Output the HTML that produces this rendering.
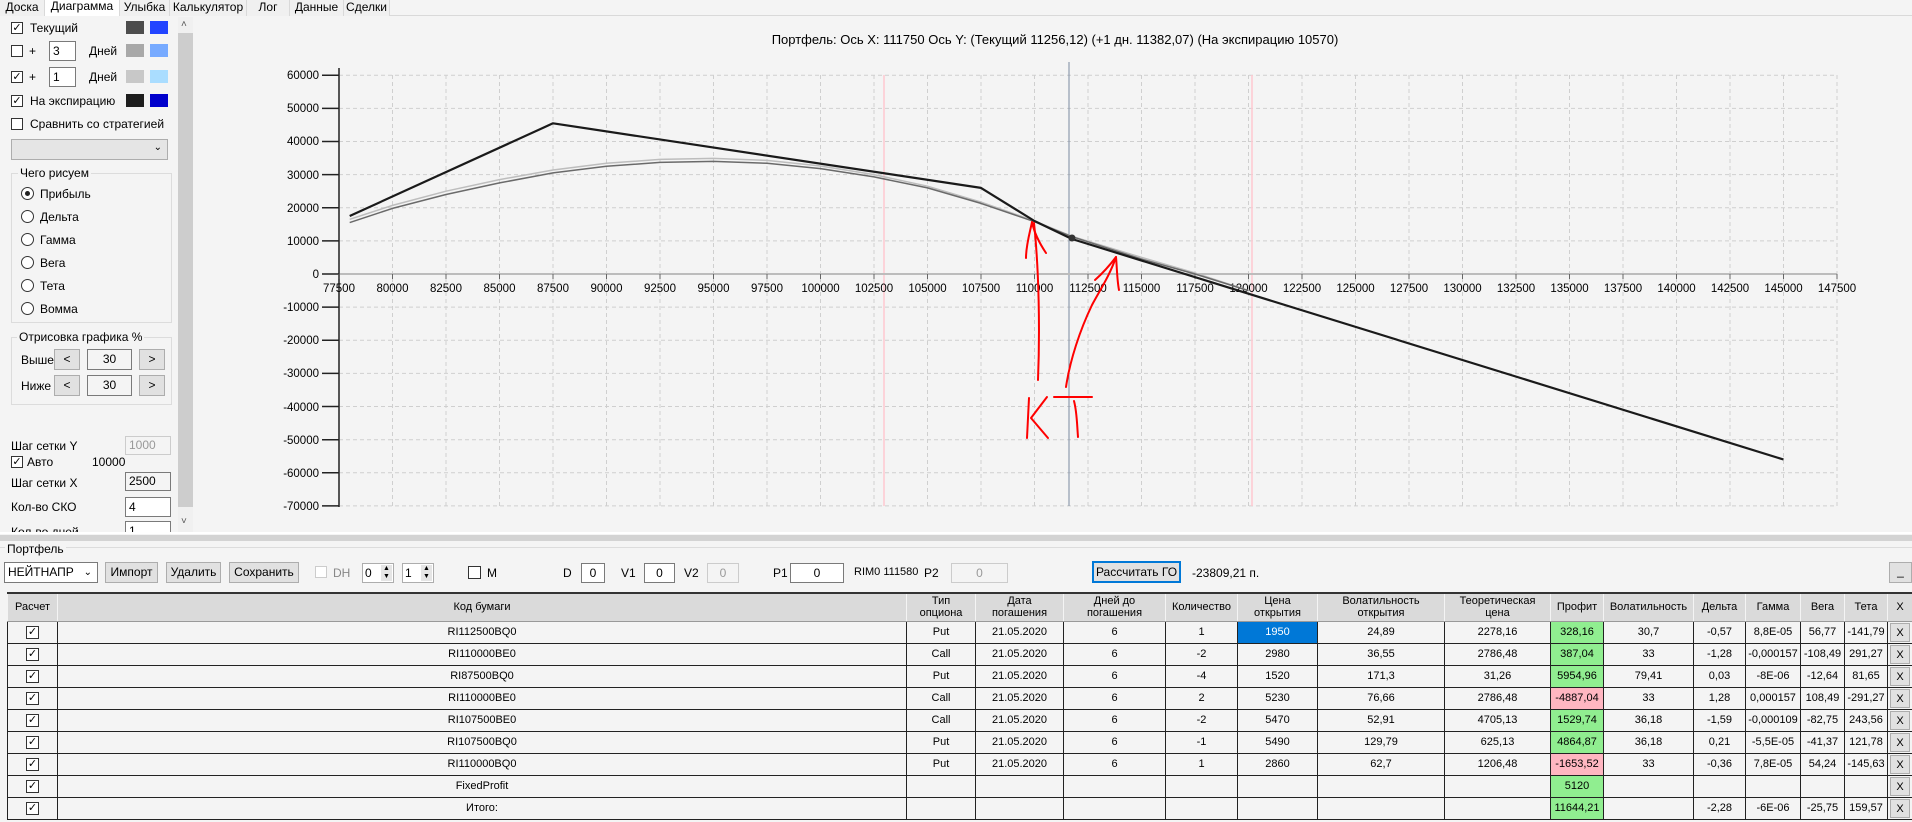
<!DOCTYPE html>
<html><head><meta charset="utf-8">
<style>
*{box-sizing:border-box}
body{margin:0;width:1912px;height:822px;overflow:hidden;background:#f4f4f4;font-family:"Liberation Sans",sans-serif;font-size:12px;color:#000;position:relative}
.a{position:absolute;white-space:nowrap}
.tab{position:absolute;top:0;height:16px;line-height:15px;text-align:center;border-right:1px solid #d9d9d9;background:#f0f0f0}
.cb{position:absolute;width:12px;height:12px;border:1px solid #333;background:#fff;font-size:11px;line-height:10px;text-align:center}
.rb{position:absolute;width:13px;height:13px;border:1px solid #333;border-radius:50%;background:#fff}
.inp{position:absolute;background:#fff;border:1px solid #7a7a7a;height:20px;line-height:18px;padding-left:3px}
.btn{position:absolute;background:#e1e1e1;border:1px solid #adadad;text-align:center;height:21px;line-height:19px}
.sw{position:absolute;width:18px;height:13px}
.grp{position:absolute;border:1px solid #dcdcdc}
.gt{position:absolute;background:#f4f4f4;padding:0 2px}
table{position:absolute;left:7px;top:592px;border-collapse:collapse;table-layout:fixed;width:1905px;border-top:2px solid #333}
td{border:1px solid #222;height:22px;padding:0;text-align:center;font-size:11px;overflow:hidden;white-space:nowrap;background:#f4f4f4}
th{background:#dadada;font-weight:normal;font-size:11px;height:28px;border-left:1px solid #f4f4f4;border-right:1px solid #f4f4f4;border-bottom:1px solid #999;line-height:12px;padding:0;overflow:hidden;white-space:nowrap}
.ck{display:inline-block;width:13px;height:13px;border:1px solid #333;background:#fff;font-size:11px;line-height:11px;vertical-align:middle}
.g{background:#90ee90}.p{background:#ffb6c1}
.x{display:block;margin:1px 2px;height:19px;line-height:18px;background:#e1e1e1;border:1px solid #adadad}
td.xc{padding:0}
</style></head><body>

<div style="position:absolute;left:0;top:15px;width:1912px;height:1px;background:#d9d9d9"></div>
<div class="tab" style="left:0;width:45px">Доска</div>
<div class="tab" style="left:45px;width:75px;background:#fff;top:-1px;height:17px">Диаграмма</div>
<div class="tab" style="left:120px;width:50px">Улыбка</div>
<div class="tab" style="left:170px;width:77px">Калькулятор</div>
<div class="tab" style="left:247px;width:43px">Лог</div>
<div class="tab" style="left:290px;width:54px">Данные</div>
<div class="tab" style="left:344px;width:46px">Сделки</div>

<div class="cb" style="left:11px;top:22px">✓</div><div class="a" style="left:30px;top:21px">Текущий</div>
<div class="sw" style="left:126px;top:21px;background:#4d4d4d"></div><div class="sw" style="left:150px;top:21px;background:#2244ff"></div>
<div class="cb" style="left:11px;top:45px"></div><div class="a" style="left:29px;top:44px">+</div>
<div class="inp" style="left:49px;top:41px;width:27px">3</div><div class="a" style="left:89px;top:44px">Дней</div>
<div class="sw" style="left:126px;top:44px;background:#a8a8a8"></div><div class="sw" style="left:150px;top:44px;background:#77aaff"></div>
<div class="cb" style="left:11px;top:71px">✓</div><div class="a" style="left:29px;top:70px">+</div>
<div class="inp" style="left:49px;top:67px;width:27px">1</div><div class="a" style="left:89px;top:70px">Дней</div>
<div class="sw" style="left:126px;top:70px;background:#c8c8c8"></div><div class="sw" style="left:150px;top:70px;background:#aaddff"></div>
<div class="cb" style="left:11px;top:95px">✓</div><div class="a" style="left:30px;top:94px">На экспирацию</div>
<div class="sw" style="left:126px;top:94px;background:#1e1e1e"></div><div class="sw" style="left:150px;top:94px;background:#0000cc"></div>
<div class="cb" style="left:11px;top:118px"></div><div class="a" style="left:30px;top:117px">Сравнить со стратегией</div>
<div class="a" style="left:11px;top:139px;width:157px;height:21px;background:#e5e5e5;border:1px solid #adadad"><span style="position:absolute;right:5px;top:2px;font-size:10px">&#8964;</span></div>

<div class="grp" style="left:11px;top:173px;width:161px;height:150px"></div>
<div class="gt" style="left:18px;top:166px">Чего рисуем</div>
<div class="rb" style="left:21px;top:187px"><div style="position:absolute;left:3px;top:3px;width:5px;height:5px;border-radius:50%;background:#222"></div></div><div class="a" style="left:40px;top:187px">Прибыль</div>
<div class="rb" style="left:21px;top:210px"></div><div class="a" style="left:40px;top:210px">Дельта</div>
<div class="rb" style="left:21px;top:233px"></div><div class="a" style="left:40px;top:233px">Гамма</div>
<div class="rb" style="left:21px;top:256px"></div><div class="a" style="left:40px;top:256px">Вега</div>
<div class="rb" style="left:21px;top:279px"></div><div class="a" style="left:40px;top:279px">Тета</div>
<div class="rb" style="left:21px;top:302px"></div><div class="a" style="left:40px;top:302px">Вомма</div>

<div class="grp" style="left:11px;top:337px;width:161px;height:68px"></div>
<div class="gt" style="left:17px;top:330px">Отрисовка графика %</div>
<div class="a" style="left:21px;top:353px">Выше</div>
<div class="btn" style="left:54px;top:349px;width:26px">&lt;</div>
<div class="a" style="left:87px;top:349px;width:45px;height:21px;border:1px solid #7a7a7a;text-align:center;line-height:19px">30</div>
<div class="btn" style="left:139px;top:349px;width:26px">&gt;</div>
<div class="a" style="left:21px;top:379px">Ниже</div>
<div class="btn" style="left:54px;top:375px;width:26px">&lt;</div>
<div class="a" style="left:87px;top:375px;width:45px;height:21px;border:1px solid #7a7a7a;text-align:center;line-height:19px">30</div>
<div class="btn" style="left:139px;top:375px;width:26px">&gt;</div>

<div class="a" style="left:11px;top:439px">Шаг сетки Y</div>
<div class="a" style="left:125px;top:436px;width:46px;height:19px;border:1px solid #ccc;color:#999;padding-left:3px;line-height:17px">1000</div>
<div class="cb" style="left:11px;top:456px">✓</div><div class="a" style="left:27px;top:455px">Авто</div><div class="a" style="left:92px;top:455px">10000</div>
<div class="a" style="left:11px;top:476px">Шаг сетки X</div>
<div class="a" style="left:125px;top:472px;width:46px;height:19px;border:1px solid #7a7a7a;padding-left:3px;line-height:17px">2500</div>
<div class="a" style="left:11px;top:500px">Кол-во СКО</div>
<div class="inp" style="left:125px;top:497px;width:46px">4</div>
<div style="position:absolute;left:0;top:515px;width:178px;height:17px;overflow:hidden"><div class="a" style="left:11px;top:10px">Кол-во дней</div><div class="inp" style="left:125px;top:6px;width:46px">1</div></div>

<div style="position:absolute;left:178px;top:17px;width:15px;height:515px;background:#f0f0f0"></div>
<div style="position:absolute;left:178px;top:33px;width:15px;height:474px;background:#cdcdcd"></div>
<div class="a" style="left:181px;top:19px;font-size:10px;color:#555">&#708;</div>
<div class="a" style="left:181px;top:516px;font-size:10px;color:#555">&#709;</div>

<svg style="position:absolute;left:0;top:0" width="1912" height="540" font-family="Liberation Sans" font-size="11.5">
<text x="1055" y="44" text-anchor="middle" font-size="13">Портфель: Ось X: 111750 Ось Y:  (Текущий 11256,12)  (+1 дн. 11382,07)  (На экспирацию 10570)</text>
<g stroke="#cfcfcf" stroke-dasharray="4,3" stroke-width="1" fill="none">
<path d="M339 75.2H1837M339 108.4H1837M339 141.5H1837M339 174.6H1837M339 207.7H1837M339 240.9H1837M339 307.1H1837M339 340.3H1837M339 373.4H1837M339 406.5H1837M339 439.7H1837M339 472.8H1837M339 505.9H1837"/>
<path d="M392.5 75V506M446 75V506M499.5 75V506M553 75V506M606.5 75V506M660 75V506M713.5 75V506M767 75V506M820.5 75V506M874 75V506M927.5 75V506M981 75V506M1034.5 75V506M1088 75V506M1141.5 75V506M1195 75V506M1248.5 75V506M1302 75V506M1355.5 75V506M1409 75V506M1462.5 75V506M1516 75V506M1569.5 75V506M1623 75V506M1676.5 75V506M1730 75V506M1783.5 75V506M1837 75V506"/>
</g>
<path d="M884 75V506M1252 75V506" stroke="#ffc8d0" stroke-width="1.5"/>
<path d="M1069 62V506" stroke="#7a8aa0" stroke-width="1"/>
<path d="M339 274H1837" stroke="#bcbcbc" stroke-width="2"/>
<path d="M339 68V507" stroke="#555" stroke-width="2"/>
<g stroke="#222" stroke-width="1.5">
<path d="M322 75.2H339M322 108.4H339M322 141.5H339M322 174.6H339M322 207.7H339M322 240.9H339M322 274H339M322 307.1H339M322 340.3H339M322 373.4H339M322 406.5H339M322 439.7H339M322 472.8H339M322 505.9H339"/>
</g>
<g stroke="#666" stroke-width="1">
<path d="M339 274V279M392.5 274V279M446 274V279M499.5 274V279M553 274V279M606.5 274V279M660 274V279M713.5 274V279M767 274V279M820.5 274V279M874 274V279M927.5 274V279M981 274V279M1034.5 274V279M1088 274V279M1141.5 274V279M1195 274V279M1248.5 274V279M1302 274V279M1355.5 274V279M1409 274V279M1462.5 274V279M1516 274V279M1569.5 274V279M1623 274V279M1676.5 274V279M1730 274V279M1783.5 274V279M1837 274V279"/>
</g>
<g text-anchor="end">
<text x="319" y="79">60000</text><text x="319" y="112">50000</text><text x="319" y="145">40000</text><text x="319" y="179">30000</text><text x="319" y="212">20000</text><text x="319" y="245">10000</text><text x="319" y="278">0</text><text x="319" y="311">-10000</text><text x="319" y="344">-20000</text><text x="319" y="377">-30000</text><text x="319" y="411">-40000</text><text x="319" y="444">-50000</text><text x="319" y="477">-60000</text><text x="319" y="510">-70000</text>
</g>
<g text-anchor="middle">
<text x="339" y="292">77500</text><text x="392.5" y="292">80000</text><text x="446" y="292">82500</text><text x="499.5" y="292">85000</text><text x="553" y="292">87500</text><text x="606.5" y="292">90000</text><text x="660" y="292">92500</text><text x="713.5" y="292">95000</text><text x="767" y="292">97500</text><text x="820.5" y="292">100000</text><text x="874" y="292">102500</text><text x="927.5" y="292">105000</text><text x="981" y="292">107500</text><text x="1034.5" y="292">110000</text><text x="1088" y="292">112500</text><text x="1141.5" y="292">115000</text><text x="1195" y="292">117500</text><text x="1248.5" y="292">120000</text><text x="1302" y="292">122500</text><text x="1355.5" y="292">125000</text><text x="1409" y="292">127500</text><text x="1462.5" y="292">130000</text><text x="1516" y="292">132500</text><text x="1569.5" y="292">135000</text><text x="1623" y="292">137500</text><text x="1676.5" y="292">140000</text><text x="1730" y="292">142500</text><text x="1783.5" y="292">145000</text><text x="1837" y="292">147500</text>
</g>
<polyline fill="none" stroke="#bdbdbd" stroke-width="1.5" stroke-linejoin="round" points="349.7,219.3 392.5,205.4 446,191.2 499.5,179.6 553,170 606.5,163.3 660,159.4 713.5,158.4 767,160.4 820.5,166 874,174.6 927.5,186.2 981,202.1 1034.5,221 1072,236.3 1141.5,257.4 1195,273 1248.5,290.6"/>
<polyline fill="none" stroke="#6a6a6a" stroke-width="1.5" stroke-linejoin="round" points="349.7,222.6 392.5,208.4 446,194.5 499.5,182.9 553,172.9 606.5,166.3 660,162.4 713.5,161.4 767,163.3 820.5,168.6 874,176.9 927.5,187.9 981,203.4 1034.5,221.7 1072,236.7 1141.5,259.1 1195,274 1248.5,290.6"/>
<polyline fill="none" stroke="#1a1a1a" stroke-width="2.2" stroke-linejoin="round" points="349.7,216 553,123.3 981,187.9 1034.5,221 1072,239 1783.5,459.5"/>
<circle cx="1072" cy="238" r="3.5" fill="#333"/>
<g fill="none" stroke="#ff0000" stroke-width="2" stroke-linecap="round" stroke-linejoin="round">
<path d="M1038 380C1040 330 1039 270 1034 223"/>
<path d="M1026 258C1026 245 1030 232 1032 222M1032 222C1034 232 1040 244 1046 253"/>
<path d="M1029 398L1027 438M1047 397L1031 418L1048 438"/>
<path d="M1054 397H1092M1074 401C1077 412 1077 425 1078 437"/>
<path d="M1066 387C1070 360 1080 330 1092 305C1100 290 1110 275 1116 257"/>
<path d="M1095 280C1104 272 1110 265 1116 257M1116 257C1117 268 1117 280 1119 290"/>
</g>
</svg>

<div style="position:absolute;left:0;top:532px;width:1912px;height:2px;background:#fff"></div>
<div style="position:absolute;left:0;top:535px;width:1912px;height:6px;background:#d3d3d3"></div>
<div style="position:absolute;left:0;top:547px;width:1912px;height:1px;background:#dcdcdc"></div>
<div class="a" style="left:5px;top:542px;background:#f4f4f4;padding:0 2px">Портфель</div>

<div class="a" style="left:4px;top:562px;width:94px;height:21px;background:#fff;border:1px solid #7a7a7a;line-height:19px;padding-left:3px">НЕЙТНАПР<span style="position:absolute;right:5px;top:0;font-size:10px">&#8964;</span></div>
<div class="btn" style="left:105px;top:562px;width:53px">Импорт</div>
<div class="btn" style="left:166px;top:562px;width:55px">Удалить</div>
<div class="btn" style="left:229px;top:562px;width:70px">Сохранить</div>
<div class="a" style="left:315px;top:566px;width:12px;height:12px;border:1px solid #ccc;background:#fff"></div>
<div class="a" style="left:333px;top:566px;color:#888">DH</div>
<div class="a" style="left:362px;top:563px;width:32px;height:20px;border:1px solid #adadad;background:#fff;padding-left:2px;line-height:18px">0<span style="position:absolute;right:1px;top:1px;width:11px;height:16px;background:#e5e5e5;font-size:7px;line-height:8px;text-align:center">▲<br>▼</span></div>
<div class="a" style="left:402px;top:563px;width:32px;height:20px;border:1px solid #adadad;background:#fff;padding-left:2px;line-height:18px">1<span style="position:absolute;right:1px;top:1px;width:11px;height:16px;background:#e5e5e5;font-size:7px;line-height:8px;text-align:center">▲<br>▼</span></div>
<div class="a" style="left:468px;top:566px;width:13px;height:13px;border:1px solid #333;background:#fff"></div>
<div class="a" style="left:487px;top:566px">M</div>
<div class="a" style="left:563px;top:566px">D</div>
<div class="a" style="left:581px;top:563px;width:24px;height:20px;border:1px solid #7a7a7a;background:#fff;text-align:center;line-height:18px">0</div>
<div class="a" style="left:621px;top:566px">V1</div>
<div class="a" style="left:644px;top:563px;width:31px;height:20px;border:1px solid #7a7a7a;background:#fff;text-align:center;line-height:18px">0</div>
<div class="a" style="left:684px;top:566px">V2</div>
<div class="a" style="left:707px;top:563px;width:32px;height:20px;border:1px solid #ccc;text-align:center;line-height:18px;color:#999">0</div>
<div class="a" style="left:773px;top:566px">P1</div>
<div class="a" style="left:790px;top:563px;width:54px;height:20px;border:1px solid #7a7a7a;background:#fff;text-align:center;line-height:18px">0</div>
<div class="a" style="left:854px;top:566px;font-size:11px">RIM0 111580</div>
<div class="a" style="left:924px;top:566px">P2</div>
<div class="a" style="left:951px;top:563px;width:57px;height:20px;border:1px solid #ccc;text-align:center;line-height:18px;color:#999">0</div>
<div class="a" style="left:1092px;top:561px;width:89px;height:22px;border:2px solid #0078d7;background:#e1e1e1;text-align:center;line-height:18px">Рассчитать ГО</div>
<div class="a" style="left:1192px;top:566px">-23809,21 п.</div>
<div class="a" style="left:1889px;top:562px;width:23px;height:21px;border:1px solid #adadad;background:#e1e1e1;text-align:center;line-height:17px">_</div>

<table>
<colgroup><col style="width:50px"><col style="width:849px"><col style="width:69px"><col style="width:88px"><col style="width:102px"><col style="width:72px"><col style="width:80px"><col style="width:127px"><col style="width:106px"><col style="width:53px"><col style="width:90px"><col style="width:52px"><col style="width:55px"><col style="width:44px"><col style="width:43px"><col style="width:25px"></colgroup>
<tr><th>Расчет</th><th>Код бумаги</th><th>Тип<br>опциона</th><th>Дата<br>погашения</th><th>Дней до<br>погашения</th><th>Количество</th><th>Цена<br>открытия</th><th>Волатильность<br>открытия</th><th>Теоретическая<br>цена</th><th>Профит</th><th>Волатильность</th><th>Дельта</th><th>Гамма</th><th>Вега</th><th>Тета</th><th>X</th></tr>
<tr><td><span class="ck">✓</span></td><td>RI112500BQ0</td><td>Put</td><td>21.05.2020</td><td>6</td><td>1</td><td style="background:#0078d7;color:#fff">1950</td><td>24,89</td><td>2278,16</td><td class="g">328,16</td><td>30,7</td><td>-0,57</td><td>8,8E-05</td><td>56,77</td><td>-141,79</td><td class="xc"><span class="x">X</span></td></tr>
<tr><td><span class="ck">✓</span></td><td>RI110000BE0</td><td>Call</td><td>21.05.2020</td><td>6</td><td>-2</td><td>2980</td><td>36,55</td><td>2786,48</td><td class="g">387,04</td><td>33</td><td>-1,28</td><td>-0,000157</td><td>-108,49</td><td>291,27</td><td class="xc"><span class="x">X</span></td></tr>
<tr><td><span class="ck">✓</span></td><td>RI87500BQ0</td><td>Put</td><td>21.05.2020</td><td>6</td><td>-4</td><td>1520</td><td>171,3</td><td>31,26</td><td class="g">5954,96</td><td>79,41</td><td>0,03</td><td>-8E-06</td><td>-12,64</td><td>81,65</td><td class="xc"><span class="x">X</span></td></tr>
<tr><td><span class="ck">✓</span></td><td>RI110000BE0</td><td>Call</td><td>21.05.2020</td><td>6</td><td>2</td><td>5230</td><td>76,66</td><td>2786,48</td><td class="p">-4887,04</td><td>33</td><td>1,28</td><td>0,000157</td><td>108,49</td><td>-291,27</td><td class="xc"><span class="x">X</span></td></tr>
<tr><td><span class="ck">✓</span></td><td>RI107500BE0</td><td>Call</td><td>21.05.2020</td><td>6</td><td>-2</td><td>5470</td><td>52,91</td><td>4705,13</td><td class="g">1529,74</td><td>36,18</td><td>-1,59</td><td>-0,000109</td><td>-82,75</td><td>243,56</td><td class="xc"><span class="x">X</span></td></tr>
<tr><td><span class="ck">✓</span></td><td>RI107500BQ0</td><td>Put</td><td>21.05.2020</td><td>6</td><td>-1</td><td>5490</td><td>129,79</td><td>625,13</td><td class="g">4864,87</td><td>36,18</td><td>0,21</td><td>-5,5E-05</td><td>-41,37</td><td>121,78</td><td class="xc"><span class="x">X</span></td></tr>
<tr><td><span class="ck">✓</span></td><td>RI110000BQ0</td><td>Put</td><td>21.05.2020</td><td>6</td><td>1</td><td>2860</td><td>62,7</td><td>1206,48</td><td class="p">-1653,52</td><td>33</td><td>-0,36</td><td>7,8E-05</td><td>54,24</td><td>-145,63</td><td class="xc"><span class="x">X</span></td></tr>
<tr><td><span class="ck">✓</span></td><td>FixedProfit</td><td></td><td></td><td></td><td></td><td></td><td></td><td></td><td class="g">5120</td><td></td><td></td><td></td><td></td><td></td><td class="xc"><span class="x">X</span></td></tr>
<tr><td><span class="ck">✓</span></td><td>Итого:</td><td></td><td></td><td></td><td></td><td></td><td></td><td></td><td class="g">11644,21</td><td></td><td>-2,28</td><td>-6E-06</td><td>-25,75</td><td>159,57</td><td class="xc"><span class="x">X</span></td></tr>
</table>
</body></html>
